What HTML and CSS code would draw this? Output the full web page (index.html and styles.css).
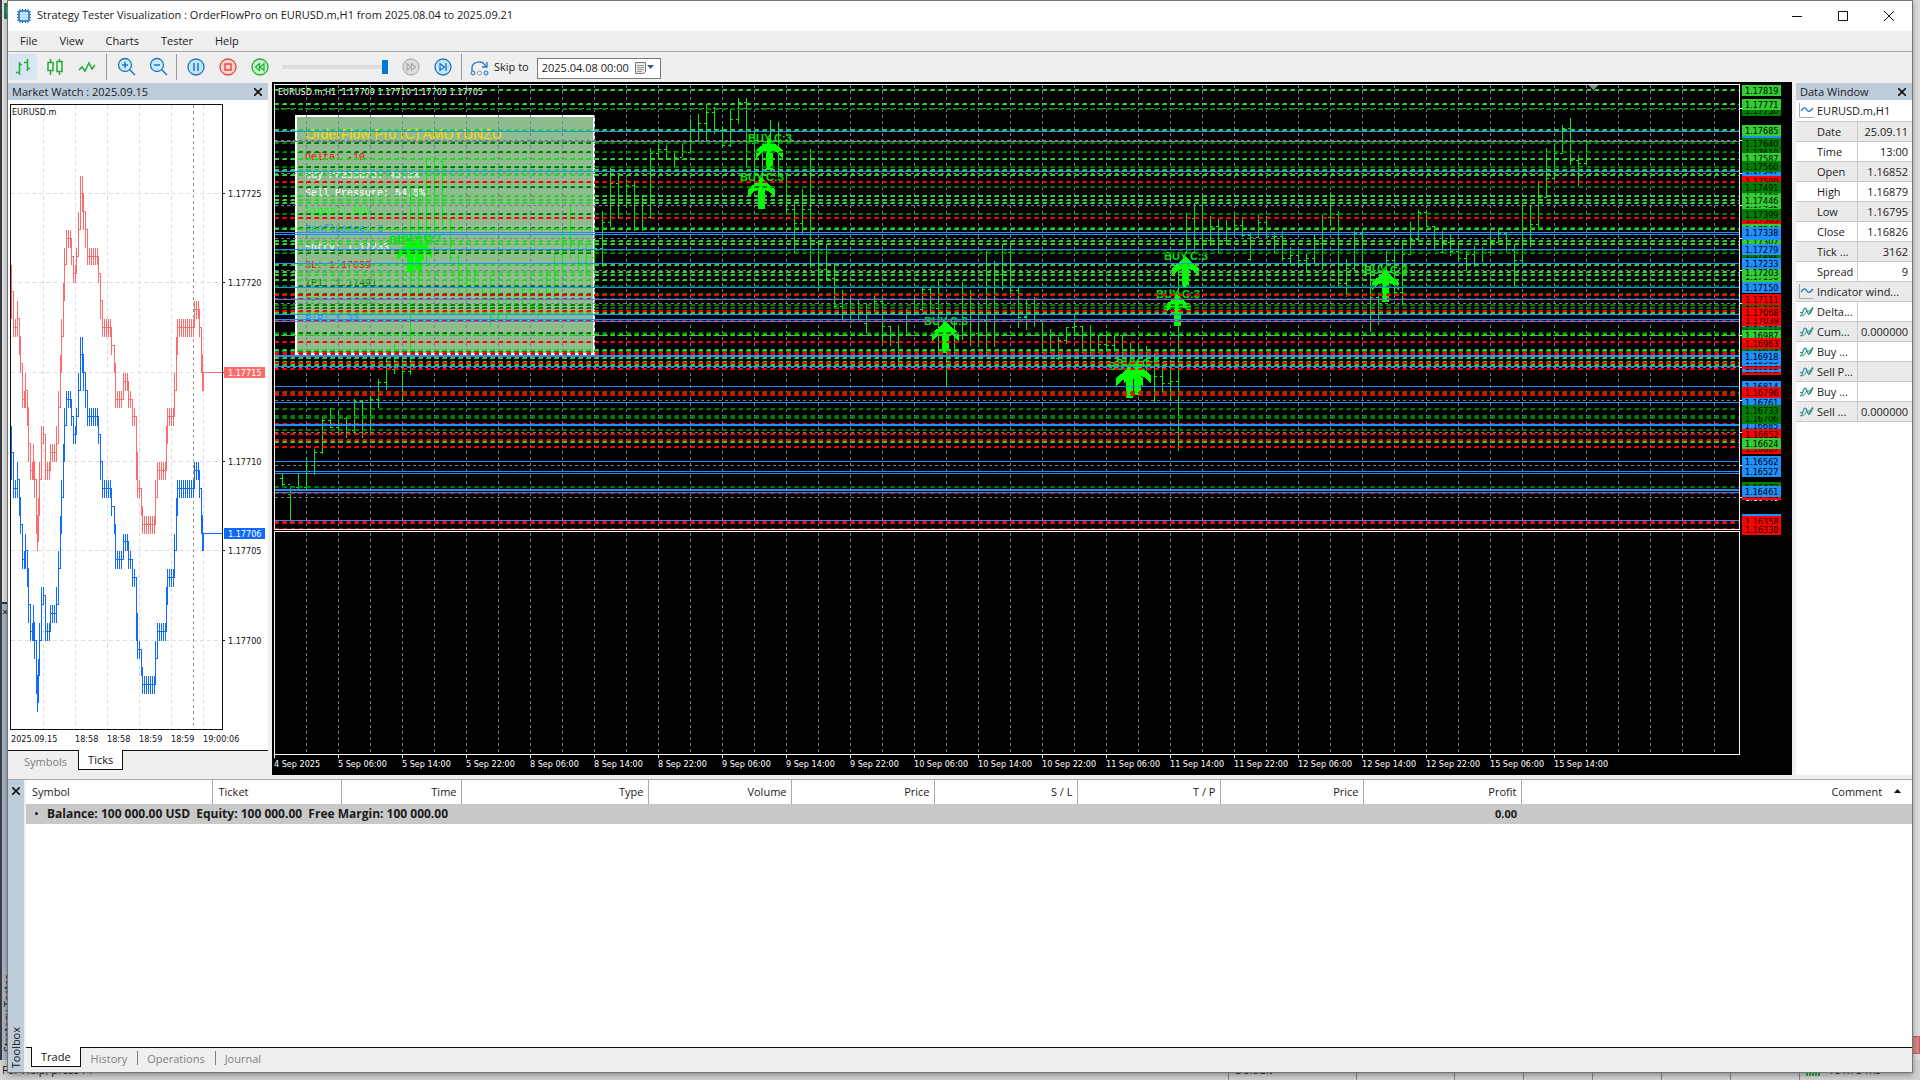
FILE: index.html
```html
<!DOCTYPE html>
<html lang="en">
<head>
<meta charset="utf-8">
<title>Strategy Tester Visualization</title>
<link rel="stylesheet" href="styles.css">
</head>
<body>
<div class="backdrop">
  <div class="back-left">
    <span class="back-logo">F</span>
    <div class="back-ruler"></div>
    <div class="back-panel"><span>×</span><span class="back-title">Strategy Tester</span></div>
  </div>
  <div class="back-right"><i></i></div>
  <div class="back-status">
    <span class="st-help">For Help, press F1</span>
    <span class="st-cell st-default">Default</span>
    <span class="st-cell st-a"></span><span class="st-cell st-b"></span><span class="st-cell st-b"></span><span class="st-cell st-b"></span><span class="st-cell st-b"></span><span class="st-cell st-b"></span>
    <span class="st-cell st-ping"><i></i>161.75 ms</span>
  </div>
</div>

<div class="window">
  <header class="titlebar">
    <svg class="app-icon" width="16" height="16" viewBox="0 0 16 16"><path d="M4 1v14M6.500 1v14M9.500 1v14M12 1v14M1 4h14M1 6.500h14M1 9.500h14M1 12h14" stroke="#1c6fb8"/><rect x="3" y="3" width="10" height="10" rx="1" fill="#b9e0ff" stroke="#1c6fb8" stroke-width="1.500"/></svg>
    <h1>Strategy Tester Visualization : OrderFlowPro on EURUSD.m,H1 from 2025.08.04 to 2025.09.21</h1>
    <div class="win-buttons">
      <button aria-label="Minimize"><svg width="12" height="12"><path d="M1 6.500h10" stroke="#111"/></svg></button>
      <button aria-label="Maximize"><svg width="12" height="12"><path d="M1.500 1.500h9v9h-9z" stroke="#111" fill="none"/></svg></button>
      <button aria-label="Close"><svg width="12" height="12"><path d="M1 1l10 10M11 1L1 11" stroke="#111" fill="none"/></svg></button>
    </div>
  </header>
  <nav class="menubar">
    <button>File</button><button>View</button><button>Charts</button><button>Tester</button><button>Help</button>
  </nav>
  <div class="toolbar">
    <div class="group g-charts">
      <button class="active" aria-label="Bars"><svg width="18" height="18"><path d="M5.500 4v13M2 14.500h3M5 6.500h3M13.500 1v12M10 4.500h3M13 10.500h3" stroke="#21ad34" stroke-width="1.500" fill="none"/></svg></button>
      <button aria-label="Candles"><svg width="18" height="18"><path d="M4.500 1v3M4.500 13v4M13.500 1v2M13.500 14v3M2 4.500h5v8h-5zM11 3.500h5v10h-5z" stroke="#21ad34" stroke-width="1.500" fill="none"/></svg></button>
      <button aria-label="Line"><svg width="18" height="18"><path d="M1 12l3-3 3 4 4-8 3 6 3-4" stroke="#21ad34" stroke-width="1.500" fill="none"/></svg></button>
    </div>
    <div class="group g-zoom">
      <button aria-label="Zoom in"><svg width="20" height="20"><circle cx="8" cy="8" r="6.500" fill="#c9e9ff" stroke="#2474bd" stroke-width="1.300"/><path d="M13 13l5 5M5 8h6M8 5v6" stroke="#2474bd" stroke-width="1.500"/></svg></button>
      <button aria-label="Zoom out"><svg width="20" height="20"><circle cx="8" cy="8" r="6.500" fill="#c9e9ff" stroke="#2474bd" stroke-width="1.300"/><path d="M13 13l5 5M5 8h6" stroke="#2474bd" stroke-width="1.500"/></svg></button>
    </div>
    <div class="group g-play">
      <button aria-label="Pause"><svg width="18" height="18"><circle cx="9" cy="9" r="8" fill="#c3e6ff" stroke="#2474bd" stroke-width="1.300"/><path d="M7 5v8M11 5v8" stroke="#2474bd" stroke-width="1.500"/></svg></button>
      <button aria-label="Stop"><svg width="18" height="18"><circle cx="9" cy="9" r="8" fill="#ffd5d0" stroke="#e24a41" stroke-width="1.300"/><path d="M6 6h6v6H6z" fill="none" stroke="#e24a41" stroke-width="1.500"/></svg></button>
      <button aria-label="Slower"><svg width="18" height="18"><circle cx="9" cy="9" r="8" fill="#ccf5cd" stroke="#21ad34" stroke-width="1.300"/><path d="M8.500 5.500v7l-4-3.500zM13 5.500v7l-4-3.500z" fill="none" stroke="#21ad34" stroke-width="1.200"/></svg></button>
      <input class="speed" type="range" min="0" max="100" value="100" aria-label="Speed">
      <button aria-label="Faster"><svg width="18" height="18"><circle cx="9" cy="9" r="8" fill="#dedede" stroke="#b5b5b5" stroke-width="1.300"/><path d="M5 5.500v7l4-3.500zM9.500 5.500v7l4-3.500z" fill="none" stroke="#aaa" stroke-width="1.200"/></svg></button>
      <button aria-label="Step"><svg width="18" height="18"><circle cx="9" cy="9" r="8" fill="#c3e6ff" stroke="#2474bd" stroke-width="1.300"/><path d="M6 5.500v7l4.500-3.500zM12 5v8" fill="none" stroke="#2474bd" stroke-width="1.300"/></svg></button>
    </div>
    <div class="group g-skip">
      <button class="skip"><svg width="20" height="18"><path d="M2 13V9a7 6 0 0 1 13-2l1 2M17 4v5h-5" fill="none" stroke="#2474bd" stroke-width="1.300"/><circle cx="3" cy="15" r="2" fill="#c3e6ff" stroke="#2474bd"/><circle cx="9.500" cy="15" r="2" fill="none" stroke="#999"/><circle cx="16" cy="15" r="2" fill="#c3e6ff" stroke="#2474bd"/></svg>Skip to</button>
      <div class="date-box">
        <input type="text" value="2025.04.08 00:00" aria-label="Skip to date">
        <button aria-label="Calendar"><svg width="20" height="14"><path d="M1.500 1.500h10v9l-2 2h-8z" fill="#eee" stroke="#777"/><path d="M3 4.500h7M3 6.500h7M3 8.500h7M3 10.500h5" stroke="#999"/><path d="M13 4h7l-3.500 4z" fill="#3d5a80"/></svg></button>
      </div>
    </div>
  </div>

  <main class="workspace">
    <section class="market">
      <div class="pane-head"><h2>Market Watch : 2025.09.15</h2><button aria-label="Close Market Watch"><svg width="8" height="8"><path d="M0 0l8 8M8 0L0 8" stroke="#111" stroke-width="1.600"/></svg></button></div>
      <div class="tick-chart"><svg id="ticks"></svg></div>
      <div class="tabs market-tabs"><button>Symbols</button><button class="on">Ticks</button></div>
    </section>
    <section class="chart"><svg id="chart"></svg></section>
    <section class="data">
      <div class="pane-head"><h2>Data Window</h2><button aria-label="Close Data Window"><svg width="8" height="8"><path d="M0 0l8 8M8 0L0 8" stroke="#111" stroke-width="1.600"/></svg></button></div>
      <table class="data-table"><tbody id="data-rows"></tbody></table>
    </section>
  </main>

  <section class="toolbox">
    <div class="toolbox-side"><button aria-label="Close Toolbox"><svg width="8" height="8"><path d="M0 0l8 8M8 0L0 8" stroke="#111" stroke-width="1.600"/></svg></button><span>Toolbox</span></div>
    <div class="toolbox-main">
      <table class="trades">
        <colgroup><col class="c-symbol"><col class="c-ticket"><col class="c-time"><col class="c-type"><col class="c-num"><col class="c-num"><col class="c-num"><col class="c-num"><col class="c-num"><col class="c-profit"><col></colgroup>
        <thead><tr><th class="left">Symbol</th><th class="left">Ticket</th><th>Time</th><th>Type</th><th>Volume</th><th>Price</th><th>S / L</th><th>T / P</th><th>Price</th><th>Profit</th><th class="comment">Comment <svg width="7" height="4"><path d="M0 4h7l-3.500-4z" fill="#111"/></svg></th></tr></thead>
        <tbody><tr><td class="left balance" colspan="9"><i></i>Balance: 100 000.00 USD&nbsp; Equity: 100 000.00&nbsp; Free Margin: 100 000.00</td><td>0.00</td><td></td></tr></tbody>
      </table>
      <div class="tabs box-tabs"><button class="on">Trade</button><button>History</button><button>Operations</button><button>Journal</button></div>
    </div>
  </section>
</div>
<script src="charts.js"></script>
</body>
</html>
```
FILE: styles.css
```css
* { box-sizing: border-box; }
html, body { height: 100%; }
body { margin: 0; font: 11px/16px "Open Sans", "Noto Sans", sans-serif; color: #1a1a1a; background: #d8d8d8; overflow: hidden; }
button { font: inherit; color: inherit; background: none; border: 0; padding: 0; margin: 0; }
h1, h2 { font: inherit; margin: 0; white-space: nowrap; }
svg { display: block; }

/* main terminal that lies behind the tester window */
.backdrop { position: absolute; inset: 0; display: grid; grid-template: 1fr 20px / 12px 1fr 12px; overflow: hidden; }
.back-left { grid-area: 1 / 1; display: flex; flex-direction: column; border-left: 2px solid #3c3d44; background: #e2e2e2; overflow: hidden; }
.back-logo { background: #1e8a45; color: #fff; font-size: 9px; height: 16px; margin: 3px 0 0 2px; padding-left: 2px; }
.back-ruler { height: 585px; border-bottom: 2px solid #333; }
.back-panel { flex: 1; background: #a9b7c6; display: flex; flex-direction: column; justify-content: space-between; padding-bottom: 8px; }
.back-title { writing-mode: vertical-rl; transform: rotate(180deg); line-height: 12px; }
.back-right { grid-area: 1 / 3; background: #dcdcdc; display: flex; flex-direction: column; justify-content: flex-end; padding-bottom: 6px; }
.back-right i { height: 18px; background: #d88486; border: 1px solid #c65c60; }
.back-status { grid-area: 2 / 1 / 3 / 4; display: flex; background: #d2d2d2; line-height: 20px; }
.st-help { flex: 1; padding-left: 2px; }
.st-cell { border-left: 1px solid #888; padding-left: 6px; }
.st-default { width: 128px; }
.st-a { width: 98px; }
.st-b { width: 69px; }
.st-ping { width: 121px; display: flex; align-items: flex-start; }
.st-ping i { width: 14px; height: 16px; margin-right: 8px; background: repeating-linear-gradient(90deg, #29a745 0 2px, #d2d2d2 2px 3px); }

.window { position: relative; display: flex; flex-direction: column; height: calc(100vh - 7px); margin: 0 7px 7px; border: 1px solid #747474; background: #efefef; box-shadow: 0 2px 6px rgba(0, 0, 0, .35); }
.titlebar { display: flex; align-items: center; height: 30px; padding-left: 8px; background: #fff; }
.titlebar h1 { flex: 1; padding: 0 0 2px 5px; }
.win-buttons { display: flex; }
.win-buttons button { width: 46px; height: 30px; display: grid; place-items: center; }
.menubar { display: flex; gap: 22px; height: 20px; padding-left: 12px; }

.toolbar { display: flex; height: 31px; border-top: 1px solid #a5a5a5; }
.group { display: flex; align-items: center; }
.group + .group::before { content: ""; width: 1px; height: 26px; background: #999; }
.g-charts { width: 98px; padding-left: 1px; gap: 4px; }
.g-charts button { width: 28px; height: 26px; display: grid; place-items: center; }
.g-charts .active { background: #d8e5f3; }
.g-zoom { width: 70px; gap: 12px; }
.g-zoom::before { margin-right: -2px; }
.g-play { width: 285px; gap: 14px; }
.g-play::before { margin-right: -4px; }
.g-skip { gap: 8px; }
.skip { display: flex; align-items: center; gap: 4px; }
.speed { appearance: none; width: 106px; height: 14px; margin: 0 0 0 -1px; background: linear-gradient(#ddd, #ddd) center / 100% 4px no-repeat; }
.speed::-webkit-slider-thumb { appearance: none; width: 6px; height: 14px; background: #0078d7; }
.date-box { display: flex; align-items: center; width: 124px; height: 21px; margin-top: 2px; border: 1px solid #7a7a7a; background: #fff; }
.date-box input { flex: 1; min-width: 0; border: 0; padding: 0 0 0 4px; font: inherit; color: inherit; background: none; }
.date-box button { width: 26px; }

.workspace { flex: 1; display: flex; gap: 4px; min-height: 0; margin-bottom: 4px; }
.pane-head { display: flex; align-items: center; justify-content: space-between; height: 17px; padding: 0 6px 0 4px; background: #bfcddb; }
.market { width: 260px; padding-top: 1px; display: flex; flex-direction: column; }
.tick-chart { flex: 1; min-height: 0; background: #fff; }
#ticks, #chart { width: 100%; height: 100%; font: 9px "DejaVu Sans Condensed", "Noto Sans", sans-serif; shape-rendering: crispEdges; }
.chart { flex: 1; min-width: 0; background: #000; overflow: hidden; }
.data { width: 116px; padding-top: 1px; background: linear-gradient(#efefef 1px, #fff 1px); }
#chart .panel-title { font: 14px "Liberation Sans", sans-serif; }
#chart .panel-text { font: 10px "Liberation Mono", monospace; }
#chart .signal { font: bold 11px "Liberation Sans", sans-serif; }

.tabs { display: flex; height: 25px; border-top: 1px solid #111; color: #808080; }
.tabs button { height: 20px; padding: 0 10px; line-height: 17px; }
.tabs .on { margin-top: -1px; padding: 0 9px; line-height: 19px; color: #111; background: #fff; border: 1px solid #111; border-top: 0; }
.market-tabs { padding-left: 5px; }
.tabs.market-tabs button:first-child { padding: 0 11px; }
.box-tabs { padding-left: 5px; }
.box-tabs button + button + button { position: relative; }
.box-tabs button + button + button::before { content: ""; position: absolute; left: 0; top: 3px; height: 14px; border-left: 1px solid #808080; }

.data-table { width: 100%; margin-top: 1px; border-collapse: collapse; table-layout: fixed; }
.data-table th, .data-table td { height: 20px; padding: 0; border-bottom: 1px solid #c8c8c8; line-height: 19px; font-weight: 400; white-space: nowrap; overflow: hidden; }
.data-table .name { width: 61px; }
.data-table th { text-align: left; }
.data-table td { padding-right: 4px; text-align: right; border-left: 1px solid #c8c8c8; }
.data-table tr:nth-child(even) { background: #eaeaea; }
.data-table span { display: flex; align-items: center; padding-left: 3px; gap: 3px; height: 19px; }
.data-table svg { width: 15px; height: 15px; flex: none; }

.toolbox { display: flex; height: 293px; border-top: 1px solid #a5a5a5; }
.toolbox-side { display: flex; flex-direction: column; align-items: center; justify-content: space-between; width: 16px; padding: 7px 0 4px; background: #bfcddb; }
.toolbox-side span { writing-mode: vertical-rl; transform: rotate(180deg); }
.toolbox-main { flex: 1; display: flex; flex-direction: column; justify-content: space-between; margin-left: 2px; background: #fff; }
.box-tabs { background: #efefef; }
.trades { width: 100%; border-collapse: collapse; table-layout: fixed; }
.trades th { height: 24px; padding: 0 4px; font-weight: 400; text-align: right; border-right: 1px solid #aaa; }
.trades td { height: 20px; padding: 0 4px; font-weight: 700; text-align: right; background: #c8c8c8; }
.trades .left { text-align: left; padding-left: 6px; }
.trades td.balance { padding-left: 9px; font-size: 12px; }
.trades td i { display: inline-block; width: 3px; height: 3px; margin: 0 9px 3px 0; border-radius: 2px; background: #111; }
.trades .comment { border: 0; padding-right: 11px; }
.comment svg { display: inline-block; margin: 0 0 3px 9px; }
.c-symbol { width: 186px; }
.c-ticket { width: 129px; }
.c-time { width: 120px; }
.c-type { width: 187px; }
.c-num { width: 143px; }
.c-profit { width: 158px; }
```
FILE: charts.js
```js
const NS = 'http://www.w3.org/2000/svg';
function add(svg, tag, attrs, text) {
  const el = document.createElementNS(NS, tag);
  for (const k in attrs) el.setAttribute(k, attrs[k]);
  if (text !== undefined) el.textContent = text;
  svg.appendChild(el);
  return el;
}
const stroke = (svg, d, color, dash) =>
  add(svg, 'path', { d, stroke: color, fill: 'none', ...(dash ? { 'stroke-dasharray': dash } : {}) });

/* ---------- tick chart ---------- */
function drawTicks() {
  const svg = document.getElementById('ticks');
  const bottom = 629, right = 214;
  const py = p => Math.round(93 + (25 - p) * 17.87) + 0.5;
  for (const p of [25, 20, 15, 10, 5, 0]) {
    stroke(svg, `M3 ${py(p)}H${right}`, '#dedede', '4 3');
    stroke(svg, `M${right} ${py(p)}h3`, '#111');
    if (p !== 15) add(svg, 'text', { x: 220, y: py(p) + 3, fill: '#111' }, '1.177' + String(p).padStart(2, '0'));
  }
  for (const x of [35, 67, 99, 131, 163, 195]) stroke(svg, `M${x}.5 5V${bottom}`, '#dedede', '4 3');
  stroke(svg, `M185.500 5V${bottom}`, '#999', '3 3');
  // [from x, to x, low, high] runs of alternating ticks
  const runs = [[3,3,18,21],[5,8,17,18],[9,9,17,19],[11,11,16,18],[12,12,15,16],[14,16,13,14],[17,17,13,15],[19,19,12,14],[20,20,10,12],[22,24,9,10],[25,25,9,11],[26,26,8,10],[28,28,6,8],[29,29,5,6],[30,30,6,8],[31,31,8,10],[33,33,10,12],[35,35,11,12],[37,41,9,10],[42,46,10,11],[48,48,10,12],[50,50,12,14],[52,52,14,16],[53,53,16,18],[55,55,18,20],[56,56,20,22],[58,62,22,23],[63,63,21,22],[65,67,20,21],[68,69,21,22],[70,71,22,24],[72,74,24,26],[75,76,23,25],[77,78,22,24],[79,89,21,22],[90,91,20,21],[92,93,18,20],[94,102,17,18],[103,104,16,17],[106,106,15,16],[107,113,13,14],[115,119,14,15],[120,123,13,14],[124,127,12,13],[128,128,9,12],[129,131,8,9],[133,133,7,8],[134,146,6,7],[147,148,7,9],[149,157,9,10],[158,158,10,12],[159,165,12,13],[166,166,13,15],[168,168,15,17],[169,185,17,18],[186,190,18,19],[191,192,17,18],[193,193,15,17],[194,194,14,15]];
  const draw = (shift, color) => {
    let d = '', prev;
    for (const [a, b, lo, hi] of runs) {
      for (let x = a; x <= b; x += 2) d += `M${x}.5 ${py(lo - shift)}V${py(hi - shift)}`;
      const m = py((lo + hi) / 2 - shift);
      if (prev) d += `M${prev[0]} ${prev[1]}H${a + 0.5}V${m}`;
      d += `M${a} ${m}H${b + 1}`;
      prev = [b + 0.5, m];
    }
    d += `M195.500 ${py(14 - shift)}V${py(15 - shift)}H${right}`;
    stroke(svg, d, color);
    const y = py(15 - shift);
    add(svg, 'rect', { x: 216, y: y - 5.5, width: 41, height: 11, fill: color });
    add(svg, 'text', { x: 220, y: y + 3, fill: '#fff' }, '1.177' + String(15 - shift).padStart(2, '0'));
  };
  draw(0, '#ff6b6b');
  draw(9, '#0f69ff');
  stroke(svg, `M2.500 4.500H${right}.5V${bottom}.5H2.500z`, '#111');
  add(svg, 'text', { x: 4, y: 15, fill: '#111' }, 'EURUSD.m');
  [[3, '2025.09.15'], [67, '18:58'], [99, '18:58'], [131, '18:59'], [163, '18:59'], [195, '19:00:06']]
    .forEach(([x, t]) => add(svg, 'text', { x, y: 642, fill: '#111' }, t));
}

/* ---------- price chart ---------- */
// Chart levels are kept in sub-units, three to a pixel.
const row = v => Math.floor(v / 3) - 2;
const LIME = '#32cd32', GREEN = '#008000', RED = '#ff0000', BLUE = '#1e90ff', GRID = '#708090';
const levels = [
  [GREEN, [87,189,216,261,321,402,444,510,519,619,641,676,684,760,812,940,988,1008,1014,1050,1221]],
  [LIME, [30,72,150,237,271,285,348,360,369,447,483,492,555,576,585,600,699,764,810,834,846,854,1085]],
  [RED, [306,414,645,657,693,720,786,818,824,849,867,936,945,1031,1062,1080,1101,1239,1324,1329,1347]]
];
const blueLevels = [154,274,457,463,508,550,622,658,703,718,724,826,829,858,919,967,1033,1036,1144,1174,1180,1228,1231,1237,1321];
// high, low, open (0 = none), close (0 = none); one entry per bar
const bars = [
[1182,1217,1195,1213],[1218,1330,1243,0],[1182,1225,1223,0],[1132,1225,1222,0],[1107,1184,0,1117],[1010,1120,1117,1021],[984,1042,0,1041],[996,1062,1042,0],[1010,1071,1015,0],[957,1062,1051,963],[960,1071,963,0],[947,1062,0,958],[897,981,958,907],[838,927,0,0],[792,879,868,0],[838,960,0,874],[315,884,0,0],
[315,640,0,0],[235,560,0,0],[235,440,0,0],[237,437,245,0],[415,543,0,532],[525,633,0,0],[556,630,609,0],[565,632,605,0],[610,690,0,0],[588,740,0,715],[620,718,0,0],[650,718,0,0],[605,693,0,0],[615,672,0,628],[625,695,0,680],[632,708,0,0],[577,660,0,0],[522,657,0,522],[460,580,0,472],[380,533,0,0],[480,577,0,546],[492,586,0,532],[480,570,0,505],[393,560,0,428],[263,440,0,310],[281,412,0,0],[298,382,0,316],[305,452,0,0],[345,452,0,412],[205,413,0,219],[180,235,0,208],[196,235,0,0],[213,262,0,232],[190,230,0,217],[117,218,0,0],[102,182,0,131],[72,182,0,98],[82,160,0,150],[140,203,0,196],[90,198,0,118],[54,131,0,67],[54,262,0,0],
[155,300,190,0],[190,300,0,0],[120,200,0,0],[128,290,0,0],[280,398,0,388],[360,520,0,430],[328,462,0,388],[207,563,0,0],[480,625,487,568],[492,598,0,596],[552,685,0,679],[630,718,0,0],[655,728,0,0],[658,720,0,0],[670,757,730,0],[643,695,0,663],[648,785,0,739],[739,797,0,0],[735,860,787,0],[685,762,0,0],[655,700,0,0],[622,692,688,628],[618,700,0,685],[598,825,0,0],[690,918,0,0],[720,825,0,0],[608,777,0,0],[630,795,0,0],[672,800,760,0],[515,825,720,0],[543,800,0,0],[492,628,583,0],[492,640,516,631],[618,742,0,712],[660,747,710,0],[652,740,0,720],[718,820,0,0],[747,820,0,0],[773,838,835,781],[742,790,0,742],[703,766,0,739],[738,820,0,0],[735,822,0,0],[770,818,0,792],[755,812,0,796],[765,813,0,766],[766,835,0,0],[790,900,0,0],[790,900,0,0],[800,880,0,0],[820,964,0,889],[862,935,0,910],[840,958,0,904],[560,1110,0,0],[400,520,0,0],[370,520,416,0],
[353,510,0,0],[408,495,481,439],[415,518,0,0],[420,493,481,0],[405,460,0,436],[412,468,0,465],[457,540,539,471],[407,473,0,427],[408,470,0,469],[458,519,0,469],[453,540,0,535],[502,550,0,527],[514,560,0,541],[520,575,0,535],[464,550,0,490],[403,567,0,0],[337,435,412,403],[393,622,0,609],[538,650,0,565],[453,570,0,461],[447,580,0,0],[560,753,0,652],[640,732,0,0],[512,600,0,541],[515,640,0,637],[480,675,0,522],[426,523,0,478],[390,480,0,397],[390,440,0,439],[438,510,0,0],[453,520,517,487],[465,527,0,514],[483,540,0,536],[510,570,0,523],[498,560,0,0],[502,543,0,517],[460,520,0,486],[446,488,0,460],[458,515,0,511],[492,618,0,541],[370,548,0,0],[375,498,0,433],[303,445,0,352],[205,352,0,296],[190,298,0,219],[135,220,0,145],[114,252,0,241],[225,315,240,250],[180,250,0,184]];
// tip of each buy arrow: x in pixels, y in level units
const buys = [[138,481],[146,476],[497,175],[489,293],[673,723],[857,860],[865,851],[905,643],[913,528],[1113,571]];
// later labels cover earlier ones
const tags = [
  ['1.17750',GREEN],['1.17771',LIME],['1.17819',LIME],['1.17675',BLUE],['1.17685',LIME],['1.17610',GREEN],['1.17640',GREEN],['1.17587',LIME],['1.17547',BLUE],['1.17560',GREEN],['1.17509',RED],['1.17468',LIME],['1.17491',GREEN],['1.17432',LIME],['1.17446',LIME],['1.17383',RED],['1.17348',LIME],['1.17399',GREEN],['1.17307',LIME],['1.17331',BLUE],['1.17338',BLUE],['1.17262',GREEN],['1.17279',BLUE],['1.17190',LIME],['1.17203',LIME],['1.17233',BLUE],['1.17098',GREEN],['1.17111',RED],['1.17150',BLUE],['1.17030',BLUE],['1.17039',RED],['1.17068',RED],['1.17000',GREEN],['1.16987',LIME],['1.16934',GREEN],['1.16963',RED],['1.16872',RED],['1.16882',BLUE],['1.16893',RED],['1.16905',BLUE],['1.16918',BLUE],['1.16814',BLUE],['1.16761',BLUE],['1.16796',RED],['1.16685',BLUE],['1.16706',GREEN],['1.16733',GREEN],['1.16652',RED],['1.16607',RED],['1.16624',LIME],['1.16527',BLUE],['1.16562',BLUE],['1.16440',null],['1.16451',RED],['1.16473',GREEN],['1.16461',BLUE],['1.16365',BLUE],['1.16358',RED],['1.16330',RED]];
const panelLines = [
  ['Delta: -10','#ff0000'],['Buy Pressure: 45.5%','#fff'],['Sell Pressure: 54.5%','#fff'],['Signal: BUY','#00ff00'],['Confluence: 3',BLUE],['Entry: 1.17233','#fff'],['SL: 1.17039','#ff0000'],['TP1: 1.17491',GREEN],['TP2: 1.17685',LIME],['R:R: 1.33',BLUE]];
const gridLevels = [85,181,280,376,475,571,670,766,862,961,1057,1156,1252];

function drawChart() {
  const svg = document.getElementById('chart');
  svg.textContent = '';
  const W = svg.clientWidth, H = svg.clientHeight, R = W - 53, B = H - 21, split = 447;

  add(svg, 'rect', { x: 24, y: 34, width: 298, height: 238, fill: '#8fbc8f', stroke: '#fff', 'stroke-width': 2 });
  add(svg, 'text', { x: 33, y: 57, fill: '#ffd700', class: 'panel-title' }, 'OrderFlow Pro (C) AMUYUNZU');
  panelLines.forEach(([t, c], i) => add(svg, 'text', { x: 33, y: 78 + i * 18, fill: c, class: 'panel-text' }, t));
  add(svg, 'text', { x: 6, y: 13, fill: '#fff', style: 'white-space:pre' }, 'EURUSD.m,H1  1.17709 1.17710 1.17705 1.17705');

  let d = '';
  for (let x = 34; x < R; x += 32) d += `M${x}.5 3V${split}M${x}.5 451V${B}`;
  for (const v of gridLevels) d += `M3 ${row(v)}.5H${R}`;
  stroke(svg, d, GRID, '3 3');
  stroke(svg, `M3 ${row(184)}.5H${R}`, GRID);

  d = '';
  bars.forEach(([hi, lo, o, c], i) => {
    const x = 10 + i * 8;
    d += `M${x}.5 ${row(hi)}V${row(lo) + 1}`;
    if (o) d += `M${x} ${row(o)}.5h-2`;
    if (c) d += `M${x + 1} ${row(c)}.5h2M${x + 6} ${row(c)}.5h2`;
  });
  stroke(svg, d, '#00f000');

  for (const [x, v] of buys) add(svg, 'text', { x: x - 21, y: row(v) + 4, fill: '#00e600', class: 'signal' }, 'BUY C:3');
  for (const [x, v] of buys) {
    add(svg, 'path', { transform: `translate(${x} ${row(v)})`, fill: '#00ff00', d: 'M0 0L5 5L14 12V21L9 15L4 13V32H-3V13L-8 15L-13 21V12L-4 5z' });
  }

  for (const [color, list] of levels) {
    let top = '', low = '';
    for (const v of list) {
      const y = Math.round(v / 3) - 3;
      top += `M3 ${y}.5H${R}`;
      low += `M2 ${y + 1}.5H${R}`;
    }
    stroke(svg, top, color, '4 4');
    stroke(svg, low, color, '5 3');
  }
  stroke(svg, blueLevels.map(v => `M3 ${row(v)}.5H${R}`).join(''), BLUE);

  // pane frames and the shift marker
  stroke(svg, `M2.500 ${split}.5V2.500H${R}.5V${split}.5zM2.500 ${B}.5V449.500H${R}.5V${B}.5z`, '#f4f4f4');
  add(svg, 'path', { d: `M${R - 151} 3h10l-5 5z`, fill: '#778899' });

  for (const v of gridLevels) stroke(svg, `M${R} ${row(v)}.5h4`, '#fff');
  for (const [t, c] of tags) {
    const y = Math.round(8 + (1.17819 - t) * 29500);
    if (c) add(svg, 'rect', { x: R + 3, y: y - 5, width: 39, height: 11, fill: c });
    add(svg, 'text', { x: R + 6, y: y + 4, fill: c ? '#000' : '#fff' }, t);
  }

  const times = ['4 Sep 2025'];
  for (const day of [5, 8, 9, 10, 11, 12, 15]) for (const h of ['06:00', '14:00', '22:00']) times.push(`${day} Sep ${h}`);
  times.slice(0, 21).forEach((t, i) => {
    stroke(svg, `M${2 + i * 64}.5 ${B}v4`, '#fff');
    add(svg, 'text', { x: 2 + i * 64, y: B + 13, fill: '#fff' }, t);
  });
}

/* ---------- data window ---------- */
function fillData() {
  const wave = '<svg viewBox="0 0 15 15"><path d="M.5 0v14.500H15" fill="none" stroke="#aaa"/><path d="M2 8c3-5 5-3 6-1s3 2 6-2" fill="none" stroke="#2474bd" stroke-width="1.300"/></svg>';
  const pair = '<svg viewBox="0 0 15 15"><path d="M1 12c3 0 3-8 5-8s2 6 4 6 2-4 4-6" fill="none" stroke="#2474bd" stroke-width="1.200"/><path d="M1 8.500h3M3 12c3 0 3-4 5-5h3M9 11c2-1 1-4 5-8" fill="none" stroke="#28a745" stroke-width="1"/></svg>';
  const blank = '<svg></svg>';
  const rows = [[wave,'EURUSD.m,H1'],[blank,'Date','25.09.11'],[blank,'Time','13:00'],[blank,'Open','1.16852'],[blank,'High','1.16879'],[blank,'Low','1.16795'],[blank,'Close','1.16826'],[blank,'Tick ...','3162'],[blank,'Spread','9'],[wave,'Indicator wind...'],[pair,'Delta...',''],[pair,'Cum...','0.000000'],[pair,'Buy ...',''],[pair,'Sell P...',''],[pair,'Buy ...',''],[pair,'Sell ...','0.000000']];
  const body = document.getElementById('data-rows');
  body.insertAdjacentHTML('beforebegin', '<colgroup><col class="name"><col></colgroup>');
  body.innerHTML = rows.map(([icon, k, v]) => v === undefined
    ? `<tr><th colspan="2"><span>${icon}${k}</span></th></tr>`
    : `<tr><th><span>${icon}${k}</span></th><td>${v}</td></tr>`).join('');
}

fillData();
drawTicks();
drawChart();
window.addEventListener('resize', drawChart);
```
